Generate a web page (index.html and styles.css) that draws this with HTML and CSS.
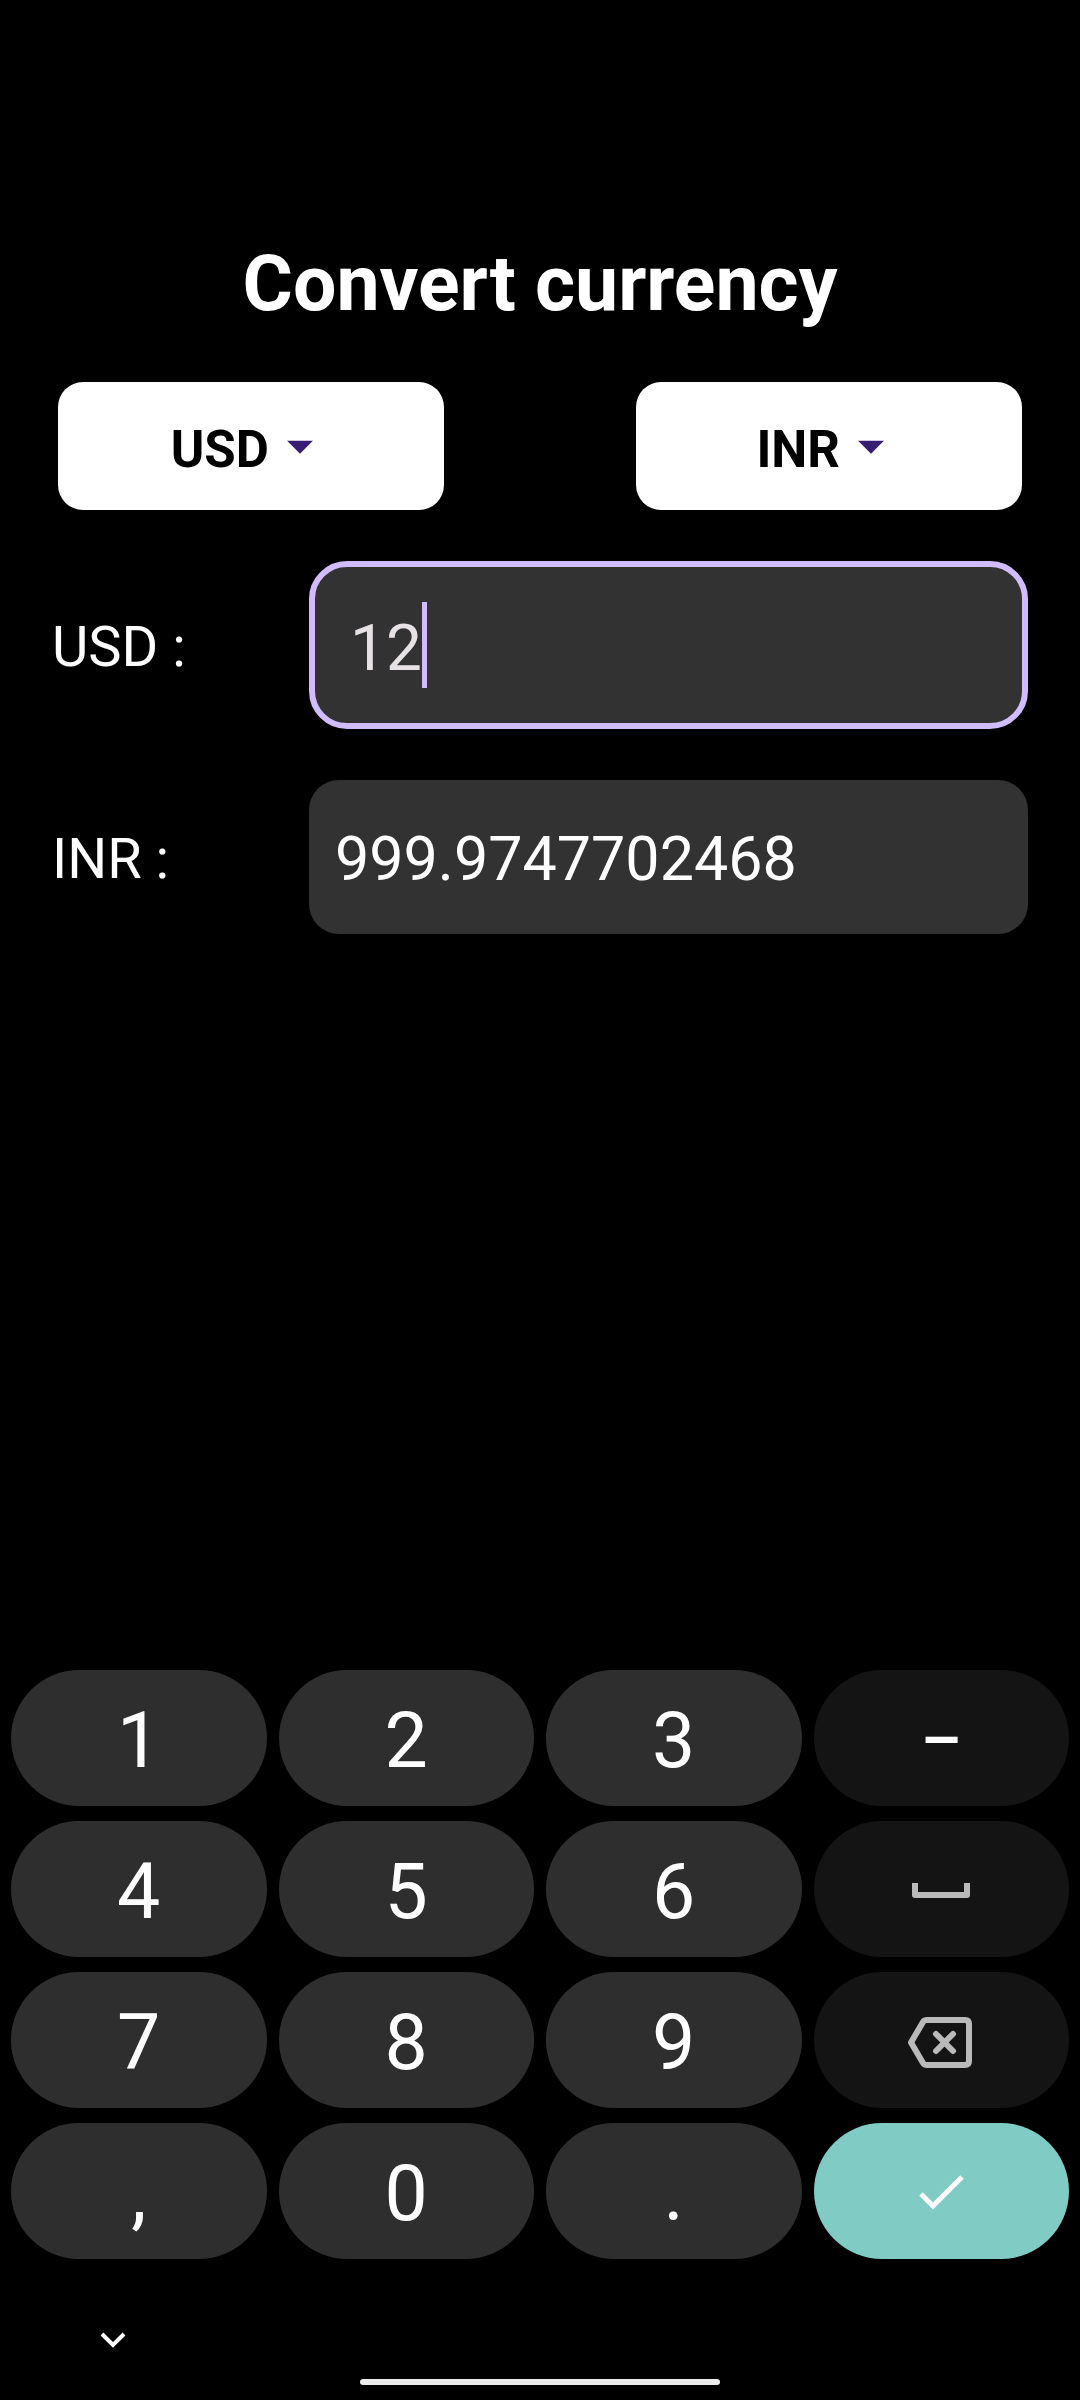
FILE: index.html
```html
<!DOCTYPE html>
<html lang="en">
<head>
  <meta charset="utf-8">
  <meta name="viewport" content="width=device-width, initial-scale=1">
  <title>Convert currency</title>
  <link rel="stylesheet" href="styles.css">
</head>
<body>
  <main class="converter">
    <h1 class="title">Convert currency</h1>
    <div class="pickers">
      <div class="picker">
        <select class="picker-select" aria-label="From currency">
          <option selected>USD</option>
          <option>INR</option>
        </select>
        <svg class="picker-arrow" viewBox="0 0 24 24" aria-hidden="true"><path d="M7 10l5 5 5-5z"/></svg>
      </div>
      <div class="picker">
        <select class="picker-select" aria-label="To currency">
          <option>USD</option>
          <option selected>INR</option>
        </select>
        <svg class="picker-arrow" viewBox="0 0 24 24" aria-hidden="true"><path d="M7 10l5 5 5-5z"/></svg>
      </div>
    </div>
    <div class="row">
      <label class="row-label" for="amount">USD :</label>
      <div class="field">
        <input class="field-input" id="amount" type="text" inputmode="numeric" size="2" value="12">
        <span class="caret"></span>
      </div>
    </div>
    <div class="row">
      <label class="row-label" for="result">INR :</label>
      <output class="result" id="result" for="amount">999.9747702468</output>
    </div>
  </main>

  <section class="keyboard" aria-label="Number pad">
    <div class="keys">
      <button class="key" type="button">1</button>
      <button class="key" type="button">2</button>
      <button class="key" type="button">3</button>
      <button class="key key-dark key-dash" type="button">–</button>
      <button class="key" type="button">4</button>
      <button class="key" type="button">5</button>
      <button class="key" type="button">6</button>
      <button class="key key-dark key-icon" type="button" aria-label="Space">
        <svg width="72" height="72" viewBox="0 0 72 72" fill="none" stroke="#bababa" stroke-width="6" stroke-linejoin="round"><path d="M10 30v12h52V30"/></svg>
      </button>
      <button class="key" type="button">7</button>
      <button class="key" type="button">8</button>
      <button class="key" type="button">9</button>
      <button class="key key-dark key-icon" type="button" aria-label="Backspace">
        <svg width="72" height="72" viewBox="0 0 72 72" fill="none" stroke="#bababa" stroke-width="6" stroke-linecap="round" stroke-linejoin="round"><path d="M22 16H60q4 0 4 4V57q0 4-4 4H22q-3 0-4-2L6 38.500 18 18q1-2 4-2z"/><path d="M31 30l17 17M48 30L31 47"/></svg>
      </button>
      <button class="key" type="button">,</button>
      <button class="key" type="button">0</button>
      <button class="key" type="button">.</button>
      <button class="key key-enter key-icon" type="button" aria-label="Done">
        <svg width="72" height="72" viewBox="0 0 72 72" fill="none" stroke="#fff" stroke-width="5"><path d="M16 39L28 51 57 22"/></svg>
      </button>
    </div>
    <div class="nav">
      <button class="hide" type="button" aria-label="Hide keyboard">
        <svg width="56" height="56" viewBox="0 0 56 56" fill="none" stroke="#fff" stroke-width="4"><path d="M17 22l11 11 11-11"/></svg>
      </button>
      <div class="home"></div>
    </div>
  </section>
</body>
</html>
```
FILE: styles.css
```css
* {
  box-sizing: border-box;
}

body {
  margin: 0;
  min-height: 100vh;
  display: flex;
  flex-direction: column;
  justify-content: space-between;
  background: #000;
  color: #fff;
  font-family: Roboto, "Liberation Sans", sans-serif;
}

button,
input,
select {
  font: inherit;
  color: inherit;
  margin: 0;
  padding: 0;
  border: 0;
  background: none;
}

.converter {
  display: flex;
  flex-direction: column;
  gap: 51px;
  padding: 237px 52px 51px;
}

.title {
  margin: 0;
  font-size: 77px;
  line-height: 94px;
  font-weight: 700;
  text-align: center;
}

.pickers {
  display: flex;
  justify-content: space-between;
  padding: 0 6px;
}

.picker {
  width: 40%;
  height: 128px;
  display: flex;
  align-items: center;
  justify-content: center;
  border-radius: 25px;
  background: #fff;
  color: #000;
}

.picker-select {
  appearance: none;
  field-sizing: content;
  padding: 6px 62px 0 0;
  font-size: 51px;
  font-weight: 700;
}

.picker-arrow {
  width: 62px;
  height: 62px;
  margin-left: -62px;
  fill: #381e72;
  pointer-events: none;
}

.row {
  display: grid;
  grid-template-columns: 257px 1fr;
  align-items: center;
}

.row-label {
  padding-top: 4px;
  font-size: 56px;
}

.field {
  height: 168px;
  display: flex;
  align-items: center;
  padding: 0 35px;
  border: 6px solid #d0bcff;
  border-radius: 38px;
  background: #323232;
}

.field-input {
  field-sizing: content;
  padding-top: 6px;
  font-size: 64px;
  color: #e6e1e5;
  outline: none;
}

.caret {
  width: 5px;
  height: 86px;
  background: #d0bcff;
}

.result {
  height: 154px;
  display: flex;
  align-items: center;
  padding: 4px 26px 0;
  border-radius: 30px;
  background: #323232;
  font-size: 61px;
}

.keys {
  display: grid;
  grid-template-columns: repeat(4, 1fr);
  gap: 15px 12px;
  padding: 0 11px;
}

.key {
  height: 136px;
  display: flex;
  align-items: center;
  justify-content: center;
  padding-top: 6px;
  border-radius: 68px;
  background: #2e2e2e;
  font-size: 77px;
}

.key-dark {
  background: #141414;
}

.key-dash {
  font-size: 64px;
  font-weight: 500;
}

.key-enter {
  background: #80cbc4;
}

.key-icon {
  padding-top: 0;
}

.nav {
  display: flex;
  flex-direction: column;
  gap: 11px;
  padding: 53px 85px 15px;
}

.hide {
  width: 56px;
  height: 56px;
}

.hide svg {
  display: block;
}

.home {
  align-self: center;
  width: 360px;
  height: 6px;
  border-radius: 3px;
  background: #ebebeb;
}
```
